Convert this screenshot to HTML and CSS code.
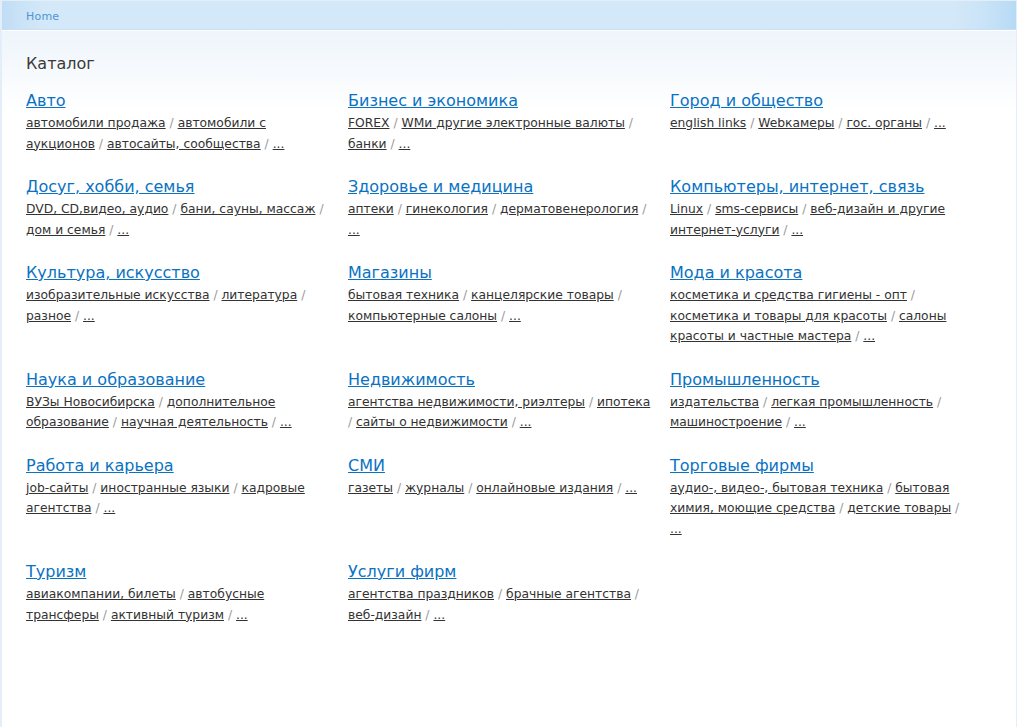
FILE: index.html
```html
<!DOCTYPE html>
<html lang="ru">
<head>
<meta charset="utf-8">
<title>Каталог</title>
<link rel="stylesheet" href="styles.css">
</head>
<body>
<div class="page">
  <div class="topbar"><a class="crumb" href="#">Home</a></div>
  <div class="content">
    <h1 class="title">Каталог</h1>
    <div class="catalog">
      <div class="cat">
        <a class="cat-name" href="#">Авто</a>
        <div class="subs"><a href="#">автомобили продажа</a> <span class="sep">/</span> <a href="#">автомобили с аукционов</a> <span class="sep">/</span> <a href="#">автосайты, сообщества</a> <span class="sep">/</span> <a href="#">...</a></div>
      </div>
      <div class="cat">
        <a class="cat-name" href="#">Бизнес и экономика</a>
        <div class="subs"><a href="#">FOREX</a> <span class="sep">/</span> <a href="#">WMи другие электронные валюты</a> <span class="sep">/</span> <a href="#">банки</a> <span class="sep">/</span> <a href="#">...</a></div>
      </div>
      <div class="cat">
        <a class="cat-name" href="#">Город и общество</a>
        <div class="subs"><a href="#">english links</a> <span class="sep">/</span> <a href="#">Webкамеры</a> <span class="sep">/</span> <a href="#">гос. органы</a> <span class="sep">/</span> <a href="#">...</a></div>
      </div>

      <div class="cat">
        <a class="cat-name" href="#">Досуг, хобби, семья</a>
        <div class="subs"><a href="#">DVD, CD,видео, аудио</a> <span class="sep">/</span> <a href="#">бани, сауны, массаж</a> <span class="sep">/</span> <a href="#">дом и семья</a> <span class="sep">/</span> <a href="#">...</a></div>
      </div>
      <div class="cat">
        <a class="cat-name" href="#">Здоровье и медицина</a>
        <div class="subs"><a href="#">аптеки</a> <span class="sep">/</span> <a href="#">гинекология</a> <span class="sep">/</span> <a href="#">дерматовенерология</a> <span class="sep">/</span> <a href="#">...</a></div>
      </div>
      <div class="cat">
        <a class="cat-name" href="#">Компьютеры, интернет, связь</a>
        <div class="subs"><a href="#">Linux</a> <span class="sep">/</span> <a href="#">sms-сервисы</a> <span class="sep">/</span> <a href="#">веб-дизайн и другие интернет-услуги</a> <span class="sep">/</span> <a href="#">...</a></div>
      </div>

      <div class="cat">
        <a class="cat-name" href="#">Культура, искусство</a>
        <div class="subs"><a href="#">изобразительные искусства</a> <span class="sep">/</span> <a href="#">литература</a> <span class="sep">/</span> <a href="#">разное</a> <span class="sep">/</span> <a href="#">...</a></div>
      </div>
      <div class="cat">
        <a class="cat-name" href="#">Магазины</a>
        <div class="subs"><a href="#">бытовая техника</a> <span class="sep">/</span> <a href="#">канцелярские товары</a> <span class="sep">/</span> <a href="#">компьютерные салоны</a> <span class="sep">/</span> <a href="#">...</a></div>
      </div>
      <div class="cat">
        <a class="cat-name" href="#">Мода и красота</a>
        <div class="subs"><a href="#">косметика и средства гигиены - опт</a> <span class="sep">/</span> <a href="#">косметика и товары для красоты</a> <span class="sep">/</span> <a href="#">салоны красоты и частные мастера</a> <span class="sep">/</span> <a href="#">...</a></div>
      </div>

      <div class="cat">
        <a class="cat-name" href="#">Наука и образование</a>
        <div class="subs"><a href="#">ВУЗы Новосибирска</a> <span class="sep">/</span> <a href="#">дополнительное образование</a> <span class="sep">/</span> <a href="#">научная деятельность</a> <span class="sep">/</span> <a href="#">...</a></div>
      </div>
      <div class="cat">
        <a class="cat-name" href="#">Недвижимость</a>
        <div class="subs"><a href="#">агентства недвижимости, риэлтеры</a> <span class="sep">/</span> <a href="#">ипотека</a> <span class="sep">/</span> <a href="#">сайты о недвижимости</a> <span class="sep">/</span> <a href="#">...</a></div>
      </div>
      <div class="cat">
        <a class="cat-name" href="#">Промышленность</a>
        <div class="subs"><a href="#">издательства</a> <span class="sep">/</span> <a href="#">легкая промышленность</a> <span class="sep">/</span> <a href="#">машиностроение</a> <span class="sep">/</span> <a href="#">...</a></div>
      </div>

      <div class="cat">
        <a class="cat-name" href="#">Работа и карьера</a>
        <div class="subs"><a href="#">job-сайты</a> <span class="sep">/</span> <a href="#">иностранные языки</a> <span class="sep">/</span> <a href="#">кадровые агентства</a> <span class="sep">/</span> <a href="#">...</a></div>
      </div>
      <div class="cat">
        <a class="cat-name" href="#">СМИ</a>
        <div class="subs"><a href="#">газеты</a> <span class="sep">/</span> <a href="#">журналы</a> <span class="sep">/</span> <a href="#">онлайновые издания</a> <span class="sep">/</span> <a href="#">...</a></div>
      </div>
      <div class="cat">
        <a class="cat-name" href="#">Торговые фирмы</a>
        <div class="subs"><a href="#">аудио-, видео-, бытовая техника</a> <span class="sep">/</span> <a href="#">бытовая химия, моющие средства</a> <span class="sep">/</span> <a href="#">детские товары</a> <span class="sep">/</span> <a href="#">...</a></div>
      </div>

      <div class="cat">
        <a class="cat-name" href="#">Туризм</a>
        <div class="subs"><a href="#">авиакомпании, билеты</a> <span class="sep">/</span> <a href="#">автобусные трансферы</a> <span class="sep">/</span> <a href="#">активный туризм</a> <span class="sep">/</span> <a href="#">...</a></div>
      </div>
      <div class="cat">
        <a class="cat-name" href="#">Услуги фирм</a>
        <div class="subs"><a href="#">агентства праздников</a> <span class="sep">/</span> <a href="#">брачные агентства</a> <span class="sep">/</span> <a href="#">веб-дизайн</a> <span class="sep">/</span> <a href="#">...</a></div>
      </div>
    </div>
  </div>
</div>
</body>
</html>
```

FILE: styles.css
```css
html, body {
  margin: 0;
  padding: 0;
  height: 100%;
  background: #ffffff;
}

body {
  font-family: "DejaVu Sans", Verdana, sans-serif;
  color: #333333;
}

.page {
  box-sizing: border-box;
  min-height: 100%;
  margin: 0 1px 0 0;
  border-style: solid;
  border-width: 1px 1px 0 2px;
  border-color: #e4eef8;
  background: linear-gradient(to bottom, #e9f1fa 0px, #f2f7fc 50px, #ffffff 110px);
}

.topbar {
  height: 30px;
  display: flex;
  align-items: center;
  padding: 1px 0 0 24px;
  box-sizing: border-box;
  border-bottom: 1px solid #ffffff;
  background:
    linear-gradient(to right, rgba(180, 214, 243, 0.6) 0px, rgba(180, 214, 243, 0) 40px),
    linear-gradient(to left, #b6daf5 0px, #c9e3f7 30px, #d3e8f8 60px, #d3e8f8 100%);
  box-shadow: inset 0 -1px 0 #c9def2;
}

.crumb {
  font-size: 11px;
  color: #4f95d5;
  text-decoration: none;
  letter-spacing: 0.2px;
}

.content {
  padding: 22px 24px 40px 24px;
}

.title {
  margin: 0 0 15px 0;
  font-size: 16px;
  font-weight: normal;
  color: #3a3a3a;
  line-height: 22px;
}

.catalog {
  display: grid;
  grid-template-columns: 322px 322px 322px;
  row-gap: 22px;
  align-items: start;
}

.cat {
  padding-right: 19px;
}

.cat-name {
  display: inline-block;
  font-size: 16px;
  line-height: 22px;
  color: #0a72c2;
  text-decoration: underline;
  margin-bottom: 1px;
}

.subs {
  font-size: 12.3px;
  line-height: 20.5px;
}

.subs a {
  color: #333333;
  text-decoration: underline;
}

.sep {
  color: #999999;
}
```
